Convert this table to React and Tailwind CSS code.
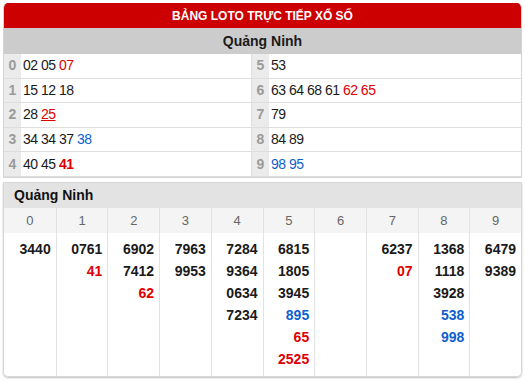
const LOTO = [
  [
    { d: 0, nums: [['02'], ['05'], ['07', 'red']] },
    { d: 5, nums: [['53']] },
  ],
  [
    { d: 1, nums: [['15'], ['12'], ['18']] },
    { d: 6, nums: [['63'], ['64'], ['68'], ['61'], ['62', 'red'], ['65', 'red']] },
  ],
  [
    { d: 2, nums: [['28'], ['25', 'redu']] },
    { d: 7, nums: [['79']] },
  ],
  [
    { d: 3, nums: [['34'], ['34'], ['37'], ['38', 'blue']] },
    { d: 8, nums: [['84'], ['89']] },
  ],
  [
    { d: 4, nums: [['40'], ['45'], ['41', 'redb']] },
    { d: 9, nums: [['98', 'blue'], ['95', 'blue']] },
  ],
];

const COLS = [
  [['3440']],
  [['0761'], ['41', 'red']],
  [['6902'], ['7412'], ['62', 'red']],
  [['7963'], ['9953']],
  [['7284'], ['9364'], ['0634'], ['7234']],
  [['6815'], ['1805'], ['3945'], ['895', 'blue'], ['65', 'red'], ['2525', 'red']],
  [],
  [['6237'], ['07', 'red']],
  [['1368'], ['1118'], ['3928'], ['538', 'blue'], ['998', 'blue']],
  [['6479'], ['9389']],
];

const tone = {
  red: 'text-[#e00000]',
  redu: 'text-[#e00000] underline',
  redb: 'text-[#e00000] font-bold',
  blue: 'text-[#0f5fcf]',
};

function Num({ n, c }) {
  return <span className={c ? tone[c] : 'text-[#1a1a1a]'}>{n}</span>;
}

export default function App() {
  return (
    <div className="w-[525px] h-[382px] bg-white pt-[3px] px-[3px] font-['Liberation_Sans',Arial,sans-serif]">
      {/* bảng loto */}
      <div className="rounded-t-[5px] border-x border-b border-[#d4d4d4] overflow-hidden">
        <div className="h-[25px] bg-[#cc0000] text-white text-[12px] font-bold flex items-center justify-center">
          BẢNG LOTO TRỰC TIẾP XỔ SỐ
        </div>
        <div className="h-[26px] bg-[#cccccc] text-[#1a1a1a] text-[14px] font-bold flex items-center justify-center">
          Quảng Ninh
        </div>
        {LOTO.map((row, i) => (
          <div key={i} className="flex h-[24.6px] border-b border-[#dedede] text-[14px] tracking-[-0.5px]">
            {row.map((cell, j) => (
              <div key={j} className={`flex ${j === 0 ? 'w-[248px] border-r border-[#dedede]' : 'flex-1'}`}>
                <div className="w-[17px] bg-[#ebebeb] text-[#9a9a9a] font-bold flex items-center justify-center tracking-normal">
                  {cell.d}
                </div>
                <div className="flex-1 flex items-center pl-[2px] whitespace-pre">
                  {cell.nums.map(([n, c], k) => (
                    <span key={k}>
                      {k > 0 ? ' ' : ''}
                      <Num n={n} c={c} />
                    </span>
                  ))}
                </div>
              </div>
            ))}
          </div>
        ))}
      </div>

      {/* bảng đầu đuôi */}
      <div className="mt-[4px] rounded-b-[5px] border border-[#d8d8d8] shadow-[0_1px_2px_rgba(0,0,0,0.25)] overflow-hidden">
        <div className="h-[25px] bg-[#e3e3e3] text-[#111] text-[14px] font-bold flex items-center pl-[10px]">
          Quảng Ninh
        </div>
        <div className="grid grid-cols-10 h-[25px] bg-[#f4f4f4] text-[#666] text-[13px]">
          {COLS.map((_, i) => (
            <div key={i} className={`flex items-center justify-center ${i > 0 ? 'border-l border-[#e2e2e2]' : ''}`}>
              {i}
            </div>
          ))}
        </div>
        <div className="grid grid-cols-10 h-[143px] text-[14px] font-bold">
          {COLS.map((col, i) => (
            <div
              key={i}
              className={`flex flex-col items-end pt-[5px] pr-[5px] leading-[22px] ${i > 0 ? 'border-l border-[#e2e2e2]' : ''}`}
            >
              {col.map(([n, c], k) => (
                <Num key={k} n={n} c={c} />
              ))}
            </div>
          ))}
        </div>
      </div>
    </div>
  );
}
